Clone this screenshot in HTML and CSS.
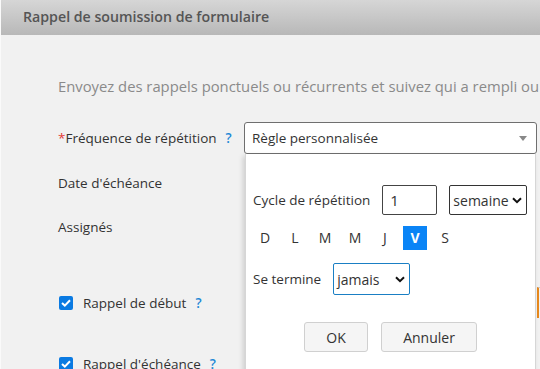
FILE: index.html
```html
<!DOCTYPE html>
<html lang="fr">
<head>
    <meta charset="UTF-8">
    <meta name="viewport" content="width=device-width, initial-scale=1.0">
    <title>Rappel de soumission de formulaire</title>
    <link rel="stylesheet" href="styles.css">
</head>
<body>
    <div class="dialog-header">Rappel de soumission de formulaire</div>

    <div class="dialog-body">
        <p class="intro">Envoyez des rappels ponctuels ou récurrents et suivez qui a rempli ou n'a pas encore rempli le formulaire.</p>

        <div class="form-row row-freq">
            <label class="field-label"><span class="required">*</span>Fréquence de répétition <span class="help">?</span></label>
            <div class="field-control">
                <div class="select-main">
                    <span>Règle personnalisée</span>
                    <span class="caret"></span>
                </div>

                <!-- custom repeat rule dropdown -->
                <div class="rule-popup">
                    <div class="popup-row">
                        <span class="popup-label">Cycle de répétition</span>
                        <div class="num-input">1</div>
                        <div class="mini-select unit-select">
                            <span>semaine</span>
                            <svg class="chev" width="10" height="7" viewBox="0 0 10 7"><path d="M1 1.2 L5 5.2 L9 1.2" fill="none" stroke="#111" stroke-width="2"/></svg>
                        </div>
                    </div>
                    <div class="days">
                        <span class="day">D</span>
                        <span class="day">L</span>
                        <span class="day">M</span>
                        <span class="day">M</span>
                        <span class="day">J</span>
                        <span class="day active">V</span>
                        <span class="day">S</span>
                    </div>
                    <div class="popup-row end-row">
                        <span class="popup-label">Se termine</span>
                        <div class="mini-select end-select">
                            <span>jamais</span>
                            <svg class="chev" width="10" height="7" viewBox="0 0 10 7"><path d="M1 1.2 L5 5.2 L9 1.2" fill="none" stroke="#111" stroke-width="2"/></svg>
                        </div>
                    </div>
                    <div class="popup-actions">
                        <button class="btn btn-ok">OK</button>
                        <button class="btn btn-cancel">Annuler</button>
                    </div>
                </div>
            </div>
        </div>

        <div class="form-row row-date">
            <label class="field-label">Date d'échéance</label>
        </div>

        <div class="form-row row-assign">
            <label class="field-label">Assignés</label>
        </div>

        <div class="form-row row-start">
            <label class="field-label"><span class="check"><svg width="10" height="8" viewBox="0 0 10 8"><path d="M1 4 L3.8 6.6 L9 1.2" fill="none" stroke="#fff" stroke-width="2"/></svg></span>Rappel de début <span class="help">?</span></label>
            <div class="field-control">
                <div class="hidden-field"></div>
            </div>
        </div>

        <div class="form-row row-due">
            <label class="field-label"><span class="check"><svg width="10" height="8" viewBox="0 0 10 8"><path d="M1 4 L3.8 6.6 L9 1.2" fill="none" stroke="#fff" stroke-width="2"/></svg></span>Rappel d'échéance <span class="help">?</span></label>
        </div>
    </div>
</body>
</html>
```

FILE: styles.css
```css
body {
    font-family: 'Open Sans', 'DejaVu Sans', sans-serif;
    font-size: 13.5px;
    color: #333;
    margin: 0;
    background: #f1f1f1;
    height: 369px;
    overflow: hidden;
    border-left: 1px solid #fafafa;
}

/* Header bar */
.dialog-header {
    height: 35px;
    line-height: 34px;
    padding-left: 22px;
    background: linear-gradient(#d6d6d6, #b8b8b8);
    color: #555;
    font-weight: 600;
    font-size: 14.2px;
    white-space: nowrap;
}

.dialog-body {
    padding-left: 57px;
}

.intro {
    margin: 41px 0 0;
    line-height: 20px;
    font-size: 14.8px;
    color: #8a8a8a;
    white-space: nowrap;
}

.form-row {
    display: flex;
    height: 32px;
    align-items: center;
}

.row-freq   { margin-top: 26px; }
.row-date   { margin-top: 13px; }
.row-assign { margin-top: 12px; }
.row-start  { margin-top: 44px; }
.row-due    { margin-top: 29px; }

.field-label {
    width: 186px;
    flex-shrink: 0;
    display: flex;
    align-items: center;
    white-space: nowrap;
}

.required {
    color: #e53935;
}

.help {
    color: #1e88d6;
    font-weight: 600;
    margin-left: 9px;
}

.field-control {
    position: relative;
    width: 293px;
    height: 32px;
}

/* Main select */
.select-main {
    box-sizing: border-box;
    height: 32px;
    border: 1px solid #6f6f6f;
    border-radius: 3px;
    background: #fff;
    display: flex;
    align-items: center;
    justify-content: space-between;
    padding: 0 8px 0 7px;
}

.caret {
    width: 0;
    height: 0;
    border-left: 4px solid transparent;
    border-right: 4px solid transparent;
    border-top: 5px solid #888;
    margin-right: 1px;
}

/* Dropdown popup */
.rule-popup {
    position: absolute;
    top: 32px;
    left: 1px;
    width: 291px;
    height: 240px;
    box-sizing: border-box;
    background: #fff;
    border-left: 1px solid #d6d6d6;
    border-right: 1px solid #d6d6d6;
    box-shadow: -2px 2px 5px rgba(0, 0, 0, 0.15);
    padding: 31px 0 0 7px;
    z-index: 2;
}

.popup-row {
    display: flex;
    align-items: center;
    height: 30px;
}

.popup-label {
    white-space: nowrap;
}

.num-input {
    box-sizing: border-box;
    width: 55px;
    height: 30px;
    border: 1px solid #444;
    border-radius: 2px;
    margin-left: 12px;
    padding-left: 7px;
    line-height: 28px;
    font-size: 15px;
}

.mini-select {
    box-sizing: border-box;
    border: 1px solid #333;
    border-radius: 2px;
    display: flex;
    align-items: center;
    justify-content: space-between;
    white-space: nowrap;
    font-size: 14px;
}

.unit-select {
    width: 78px;
    height: 30px;
    margin-left: 12px;
    padding: 0 4px 0 3px;
}

.days {
    display: flex;
    gap: 6px;
    margin-top: 11px;
}

.day {
    width: 24px;
    height: 24px;
    line-height: 24px;
    text-align: center;
    font-size: 14px;
    color: #333;
}

.day.active {
    background: #0a84f6;
    color: #fff;
    font-weight: 700;
}

.end-row {
    margin-top: 13px;
    height: 32px;
}

.end-select {
    width: 77px;
    height: 32px;
    margin-left: 12px;
    border: 1px solid #1a7fc4;
    padding: 0 4px 0 3px;
}

.popup-actions {
    display: flex;
    justify-content: center;
    gap: 13px;
    margin-top: 27px;
    padding-right: 7px;
}

.btn {
    font-family: 'Open Sans', 'DejaVu Sans', sans-serif;
    font-size: 14px;
    color: #333;
    height: 30px;
    background: #f5f5f5;
    border: 1px solid #d0d0d0;
    border-radius: 3px;
}

.btn-ok { width: 64px; }
.btn-cancel { width: 96px; }

/* Checkbox */
.check {
    box-sizing: border-box;
    width: 14px;
    height: 14px;
    border-radius: 2px;
    background: #0a7ae2;
    display: inline-flex;
    align-items: center;
    justify-content: center;
    margin: 0 10px 0 1px;
}

.hidden-field {
    margin-left: 293px;
    width: 10px;
    height: 30px;
    border-top: 1px solid #ccc;
    border-left: 2px solid #e8891c;
}
```
